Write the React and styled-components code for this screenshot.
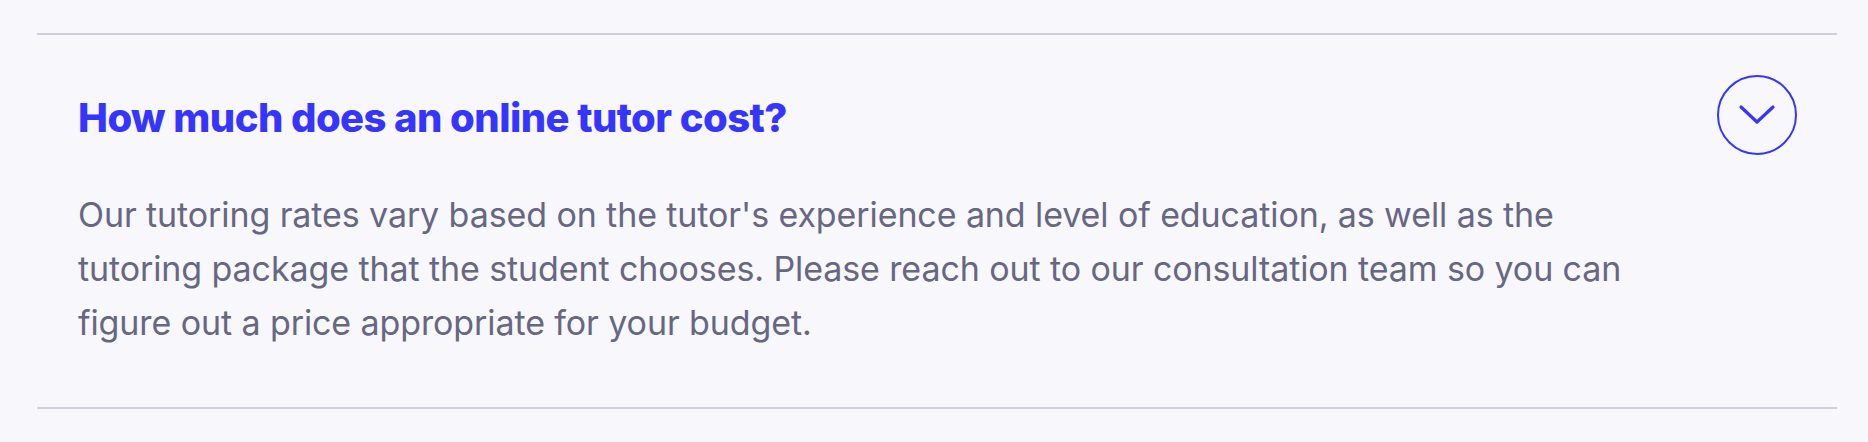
import React from "react";
import styled, { createGlobalStyle } from "styled-components";

const GlobalStyle = createGlobalStyle`
  html, body {
    margin: 0;
    padding: 0;
    background: #f7f7fc;
  }
  body {
    font-family: "Inter", "Liberation Sans", sans-serif;
  }
`;

const Page = styled.div`
  box-sizing: border-box;
  width: 1868px;
  height: 442px;
  padding: 33px 31px 0 37px;
  background: #f7f7fc;
`;

const Item = styled.div`
  border-top: 2px solid #cfcedb;
  border-bottom: 2px solid #cfcedb;
  padding: 40px 40px 57px 41px;
`;

const Header = styled.div`
  display: flex;
  align-items: center;
  justify-content: space-between;
  height: 80px;
`;

const Question = styled.h3`
  margin: 0;
  font-family: "Inter", sans-serif;
  font-weight: 800;
  font-size: 40px;
  letter-spacing: -0.014em;
  color: #3535ff;
  line-height: 1;
  padding-top: 5px;
`;

const ToggleButton = styled.button`
  box-sizing: border-box;
  width: 80px;
  height: 80px;
  flex-shrink: 0;
  border-radius: 50%;
  border: 2px solid #3535ff;
  background: transparent;
  padding: 0;
  display: flex;
  align-items: center;
  justify-content: center;
  cursor: pointer;
`;

const Answer = styled.p`
  margin: 33px 0 0;
  max-width: 1590px;
  font-family: "Inter", sans-serif;
  font-size: 34px;
  letter-spacing: -0.1px;
  line-height: 54px;
  color: #676782;
`;

const Chevron = () => (
  <svg width="38" height="22" viewBox="0 0 38 22" fill="none">
    <path
      d="M3 3L19 18L35 3"
      stroke="#3535ff"
      strokeWidth="3.2"
      strokeLinecap="round"
      strokeLinejoin="round"
    />
  </svg>
);

const App = () => (
  <>
    <GlobalStyle />
    <Page>
      <Item>
        <Header>
          <Question>How much does an online tutor cost?</Question>
          <ToggleButton aria-label="Toggle answer">
            <Chevron />
          </ToggleButton>
        </Header>
        <Answer>
          Our tutoring rates vary based on the tutor's experience and level of
          education, as well as the tutoring package that the student chooses.
          Please reach out to our consultation team so you can figure out a
          price appropriate for your budget.
        </Answer>
      </Item>
    </Page>
  </>
);

export default App;
